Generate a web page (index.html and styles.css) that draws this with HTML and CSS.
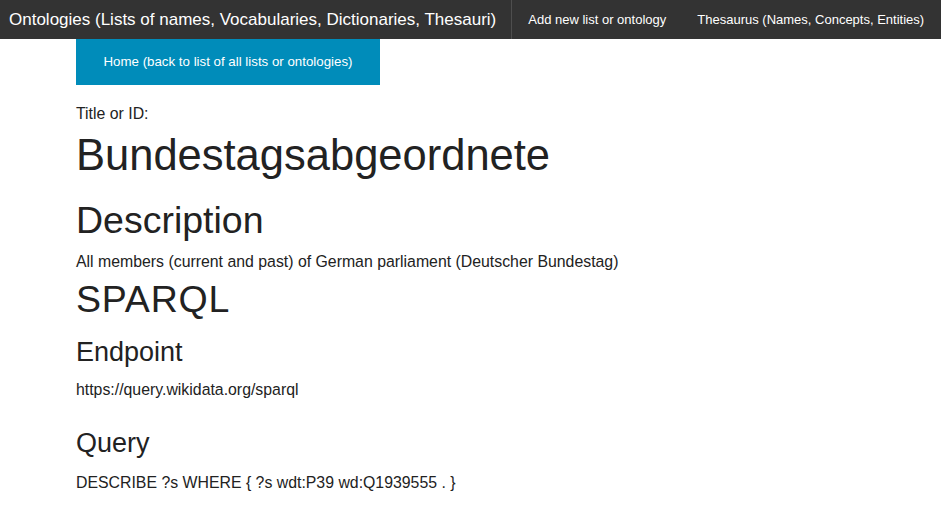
FILE: index.html
```html
<!DOCTYPE html>
<html lang="en">
<head>
<meta charset="utf-8">
<title>Bundestagsabgeordnete</title>
<link rel="stylesheet" href="styles.css">
</head>
<body>
<nav class="topbar">
  <div class="brand">Ontologies (Lists of names, Vocabularies, Dictionaries, Thesauri)</div>
  <ul class="menu">
    <li><a href="#">Add new list or ontology</a></li>
    <li><a href="#">Thesaurus (Names, Concepts, Entities)</a></li>
  </ul>
</nav>
<main class="content">
  <a class="home-btn" href="#">Home (back to list of all lists or ontologies)</a>
  <p class="label">Title or ID:</p>
  <h1 class="title">Bundestagsabgeordnete</h1>
  <h2 class="h-desc">Description</h2>
  <p class="desc">All members (current and past) of German parliament (Deutscher Bundestag)</p>
  <h2 class="h-sparql">SPARQL</h2>
  <h3 class="h-endpoint">Endpoint</h3>
  <p class="endpoint">https://query.wikidata.org/sparql</p>
  <h3 class="h-query">Query</h3>
  <p class="query">DESCRIBE ?s WHERE { ?s wdt:P39 wd:Q1939555 . }</p>
</main>
</body>
</html>
```
FILE: styles.css
```css
html, body {
  margin: 0;
  padding: 0;
  background: #fff;
}
body {
  font-family: "Liberation Sans", Arial, sans-serif;
  color: #222;
}
.topbar {
  display: flex;
  align-items: stretch;
  height: 39px;
  background: #333;
  white-space: nowrap;
  overflow: hidden;
}
.brand {
  display: flex;
  align-items: center;
  flex-shrink: 0;
  padding: 0 15px 0 9px;
  font-size: 17px;
  color: #fff;
  border-right: 1px solid #4e4e4e;
}
.menu {
  display: flex;
  flex-shrink: 0;
  list-style: none;
  margin: 0;
  padding: 0;
}
.menu li {
  display: flex;
  flex-shrink: 0;
}
.menu a {
  display: flex;
  align-items: center;
  padding: 0 15px 0 16px;
  font-size: 13px;
  color: #fff;
  text-decoration: none;
}
.content {
  padding: 0 0 0 76px;
}
.home-btn {
  display: inline-block;
  box-sizing: border-box;
  width: 304px;
  height: 46px;
  line-height: 46px;
  text-align: center;
  background: #008cba;
  color: #fff;
  font-size: 13.3px;
  text-decoration: none;
  vertical-align: top;
  white-space: nowrap;
}
p, h1, h2, h3 {
  margin: 0;
  font-weight: normal;
}
p {
  font-size: 15.85px;
  line-height: 20px;
}
.label { margin-top: 19px; }
h1 {
  font-size: 43.5px;
  line-height: 52px;
  margin-top: 5px;
}
h2 {
  font-size: 37.5px;
  line-height: 44px;
}
.h-sparql {
  letter-spacing: 0.8px;
}
h3 {
  font-size: 27px;
  line-height: 32px;
}
.h-desc { margin-top: 17px; }
.desc { margin-top: 10px; }
.h-sparql { margin-top: 5px; }
.h-endpoint { margin-top: 15px; }
.endpoint { margin-top: 12px; }
.h-query { margin-top: 27px; }
.query { margin-top: 14px; }
```
